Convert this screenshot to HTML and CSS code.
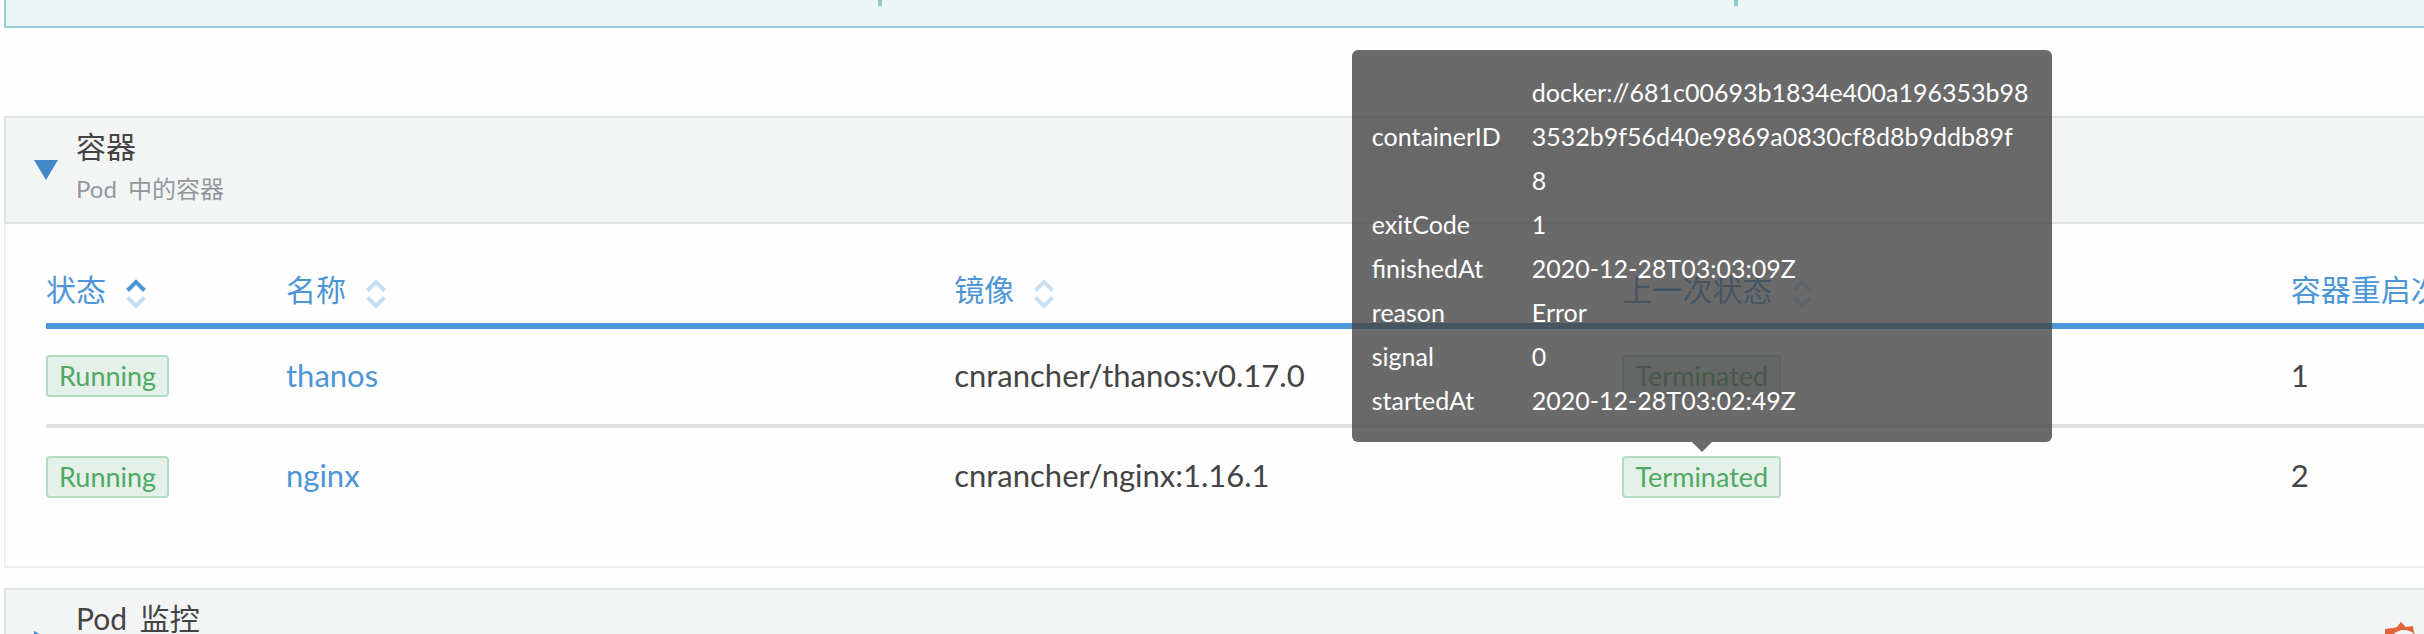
FILE: index.html
```html
<!DOCTYPE html>
<html lang="zh-CN">
<head>
<meta charset="utf-8">
<title>Pod</title>
<link rel="stylesheet" href="styles.css">
</head>
<body>
<svg class="defs" aria-hidden="true">
  <symbol id="sort" viewBox="0 0 20 30">
    <path class="up" d="M1.500 11.500 10 3l8.500 8.500"/>
    <path class="down" d="M1.500 18.500 10 27l8.500-8.500"/>
  </symbol>
</svg>
<main class="page">
  <section class="banner" aria-label="Pod 信息"><span class="divider"></span><span class="divider"></span></section>

  <section class="panel">
    <header class="panel-header">
      <button class="toggle open" type="button" aria-label="折叠容器"><svg viewBox="0 0 24 20"><path d="M0 0h24L12 20z"/></svg></button>
      <div class="heading"><h2>容器</h2><p><span class="term">Pod</span> 中的容器</p></div>
    </header>
    <div class="panel-body">
      <table class="containers">
        <colgroup><col class="col-state"><col><col><col><col></colgroup>
        <thead>
          <tr>
            <th><button class="sort asc" type="button">状态<svg><use href="#sort"/></svg></button></th>
            <th><button class="sort" type="button">名称<svg><use href="#sort"/></svg></button></th>
            <th><button class="sort" type="button">镜像<svg><use href="#sort"/></svg></button></th>
            <th><button class="sort" type="button">上一次状态<svg><use href="#sort"/></svg></button></th>
            <th><button class="sort" type="button">容器重启次数<svg><use href="#sort"/></svg></button></th>
          </tr>
        </thead>
        <tbody>
          <tr>
            <td><span class="badge">Running</span></td>
            <td><a href="#thanos">thanos</a></td>
            <td>cnrancher/thanos:v0.17.0</td>
            <td><span class="badge">Terminated</span></td>
            <td>1</td>
          </tr>
          <tr>
            <td><span class="badge">Running</span></td>
            <td><a href="#nginx">nginx</a></td>
            <td>cnrancher/nginx:1.16.1</td>
            <td>
              <span class="badge anchor">Terminated
                <span class="tooltip" role="tooltip">
                  <span class="key">containerID</span><span class="value">docker://681c00693b1834e400a196353b98<br>3532b9f56d40e9869a0830cf8d8b9ddb89f<br>8</span>
                  <span class="key">exitCode</span><span class="value">1</span>
                  <span class="key">finishedAt</span><span class="value">2020-12-28T03:03:09Z</span>
                  <span class="key">reason</span><span class="value">Error</span>
                  <span class="key">signal</span><span class="value">0</span>
                  <span class="key">startedAt</span><span class="value">2020-12-28T03:02:49Z</span>
                </span>
              </span>
            </td>
            <td>2</td>
          </tr>
        </tbody>
      </table>
    </div>
  </section>

  <section class="panel">
    <header class="panel-header">
      <button class="toggle" type="button" aria-label="展开 Pod 监控"><svg viewBox="0 0 20 22"><path d="M0 0v22l20-11z"/></svg></button>
      <div class="heading"><h2><span class="term">Pod</span> 监控</h2></div>
      <svg class="gear" viewBox="0 0 40 40"><path d="m1 7 8-1 4-1 4-5 5 5 7-1 1 7 6 4-2 6 4 5-5 5-1 6-7 1-5 2-6-1-7-1-2-7-4-5 3-6-3-6z"/><circle cx="20" cy="23" r="15"/></svg>
    </header>
  </section>
</main>
</body>
</html>
```
FILE: styles.css
```css
* { box-sizing: border-box; }

body {
  margin: 0;
  overflow: hidden;
  height: 100vh;
  background: #fefefe;
  color: #444;
  font: 30px/40px Lato, "Noto Sans CJK SC", sans-serif;
}

button {
  padding: 0;
  border: 0;
  background: none;
  color: inherit;
  font: inherit;
  cursor: pointer;
}

.defs { position: absolute; width: 0; height: 0; }

.page { width: 123.8%; padding-left: 4px; }

.banner {
  display: grid;
  grid-template-columns: 876px 856px;
  height: 28px;
  border: 2px solid #9bcdd2;
  border-top: 0;
  background: #eaf6f6;
}

.divider { height: 6px; border-right: 4px solid #8bc8cc; }

.banner + .panel { margin-top: 88px; }

.panel { margin-bottom: 20px; border: 2px solid #edf0f0; }

.panel-header {
  display: flex;
  align-items: center;
  height: 108px;
  margin: -2px -2px 0;
  padding: 0 28px;
  border: 2px solid #dde3e6;
  background: #f3f5f4;
}

.toggle { width: 42px; display: flex; fill: #4288c9; }
.toggle svg { width: 20px; height: 22px; }
.toggle.open svg { width: 24px; height: 20px; }

.heading { height: 92px; }
h2, p { margin: 0; font-weight: 400; }
h2 { font-size: 30px; line-height: 44px; }
p { color: #90989f; font-size: 24px; line-height: 42px; }
.term { margin-right: 5px; }

.panel-body { padding: 40px; }

.containers {
  width: 100%;
  table-layout: fixed;
  border-collapse: collapse;
}

.col-state { width: 240px; }

th, td { padding: 0; text-align: left; font-weight: 400; }
th { height: 62px; padding-bottom: 10px; border-bottom: 6px solid #4c95d6; }
td { height: 100px; padding-bottom: 4px; vertical-align: middle; font-size: 31px; }
tbody tr + tr td { border-top: 4px solid #e0e0e0; }

a { color: #4c95d6; text-decoration: none; }

.sort {
  display: flex;
  align-items: center;
  gap: 20px;
  color: #4c95d6;
}

.sort svg { width: 20px; height: 30px; margin-top: 10px; }

.up, .down {
  fill: none;
  stroke: #4c95d6;
  stroke-width: 4;
  stroke-opacity: .3;
}

.asc { --up: 1; }
.up { stroke-opacity: var(--up, .3); }

.badge {
  display: inline-block;
  padding: 0 11px;
  border: 2px solid #b3dcc1;
  border-radius: 4px;
  background: #e4f1e8;
  color: #50a864;
  font-size: 27px;
  line-height: 38px;
  vertical-align: middle;
}

.anchor { position: relative; }

.tooltip {
  position: absolute;
  bottom: calc(100% + 16px);
  left: 50%;
  display: grid;
  grid-template-columns: 140px 500px;
  align-items: center;
  column-gap: 20px;
  width: 700px;
  padding: 20px;
  border-radius: 6px;
  background: rgb(69 69 69 / 80%);
  color: #fff;
  font-size: 25px;
  line-height: 44px;
  transform: translateX(-50%);
}

.tooltip::after {
  content: "";
  position: absolute;
  top: 100%;
  left: calc(50% - 10px);
  border: 10px solid transparent;
  border-top-color: rgb(69 69 69 / 80%);
  border-bottom: 0;
}

.gear {
  width: 40px;
  height: 40px;
  margin-left: auto;
  margin-right: 547px;
  fill: #e0633a;
}

.gear circle { fill: #f3f5f4; }
```
